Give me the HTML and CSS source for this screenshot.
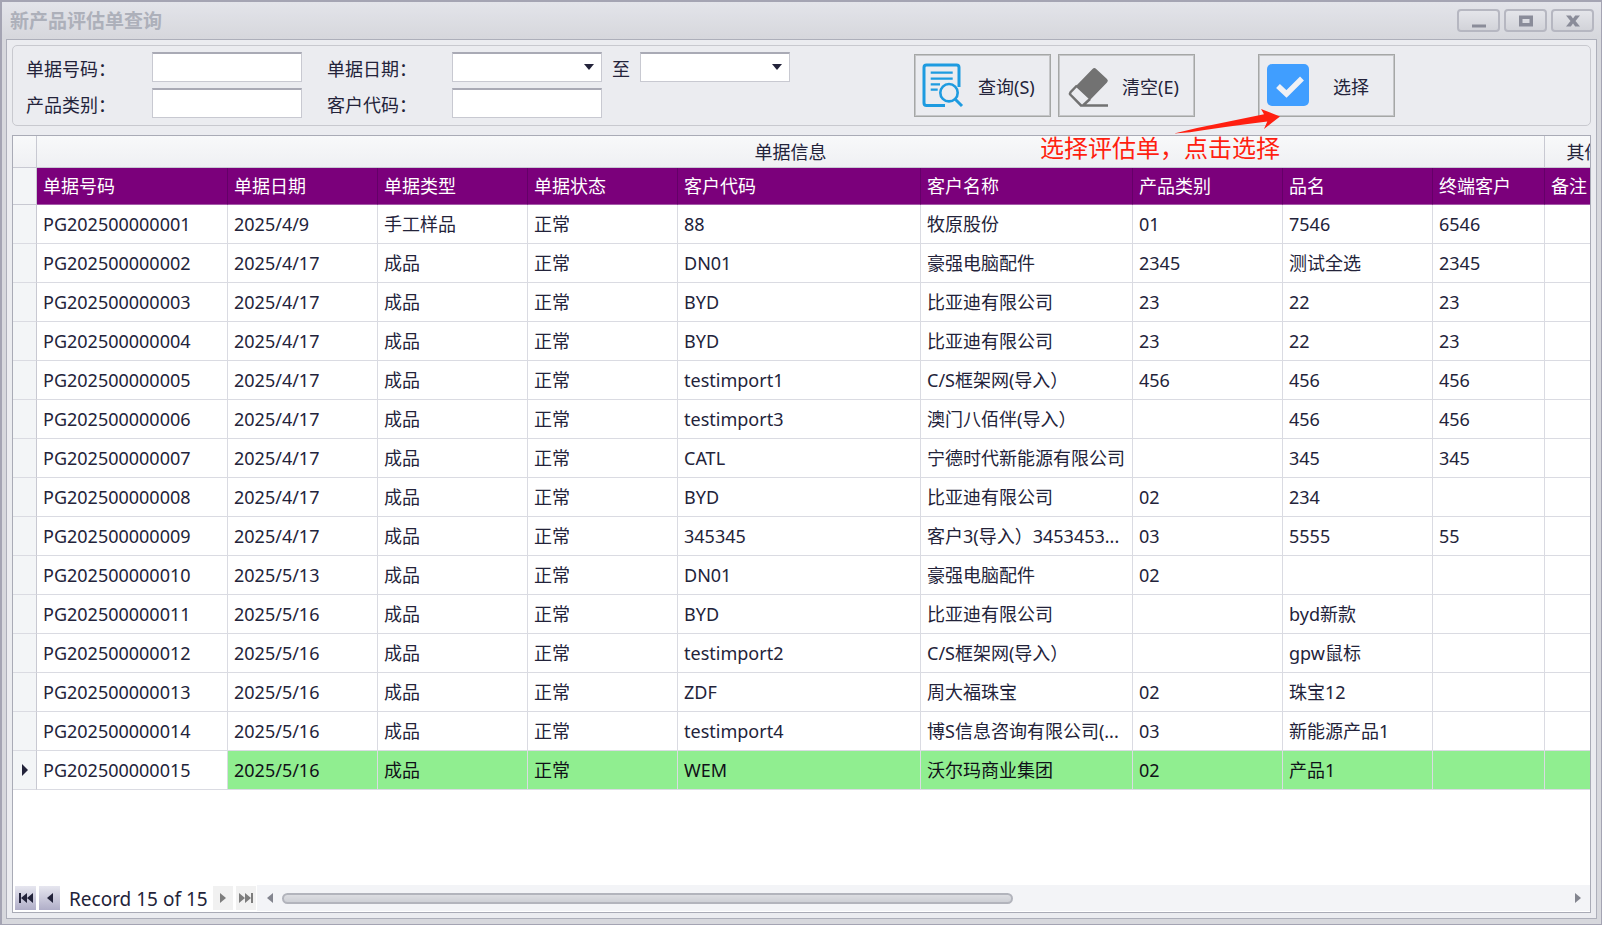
FILE: index.html
```html
<!DOCTYPE html>
<html lang="zh-CN">
<head>
<meta charset="utf-8">
<title>新产品评估单查询</title>
<link rel="stylesheet" href="styles.css">
</head>
<body>
<main class="window">
  <header class="titlebar">
    <h1 class="title">新产品评估单查询</h1>
    <div class="window-buttons">
      <button class="win-btn" type="button" aria-label="最小化"><svg width="16" height="14" viewBox="0 0 16 14"><path d="M1 10.500h14v3H1z"/></svg></button>
      <button class="win-btn" type="button" aria-label="最大化"><svg width="16" height="14" viewBox="0 0 16 14"><path fill-rule="evenodd" d="M1 1.500h14v11H1zM4.500 5v4h7V5z"/></svg></button>
      <button class="win-btn" type="button" aria-label="关闭"><svg width="16" height="14" viewBox="0 0 16 14"><path d="M1 1.500h4.800L8 4.500l2.200-3H15l-4.500 5.500 4.500 5.500h-4.800L8 9.500l-2.200 3H1l4.500-5.500z"/></svg></button>
    </div>
  </header>
  <div class="client">
    <form class="filters">
      <div class="fields">
        <label for="doc-no">单据号码：</label>
        <input class="box" id="doc-no" type="text">
        <label for="date-from">单据日期：</label>
        <span class="combo"><select class="box" id="date-from"></select><svg class="caret" width="10" height="6" viewBox="0 0 10 6"><path d="M0 0h10L5 6z"/></svg></span>
        <label class="to" for="date-to">至</label>
        <span class="combo"><select class="box" id="date-to"></select><svg class="caret" width="10" height="6" viewBox="0 0 10 6"><path d="M0 0h10L5 6z"/></svg></span>
        <label for="category">产品类别：</label>
        <input class="box" id="category" type="text">
        <label for="customer">客户代码：</label>
        <input class="box" id="customer" type="text">
      </div>
      <div class="actions">
        <button class="action" type="button">
          <svg width="46" height="48" viewBox="0 0 46 48" fill="none" stroke="#1e9be0" stroke-width="3">
            <path d="M39 25V5.500Q39 3 36.500 3H6.500Q4 3 4 5.500V41Q4 43.500 6.500 43.500H25"/>
            <path stroke-width="2.200" d="M10.700 10.700h22M10.700 16.700h22M10.700 22.300H20M10.700 27.700h7"/>
            <circle cx="29" cy="30.700" r="8.700" stroke-width="2.600"/>
            <path d="M35 37l7 7"/>
          </svg>
          <span class="caption">查询(S)</span>
        </button>
        <button class="action" type="button">
          <svg width="46" height="48" viewBox="0 0 46 48" fill="#727272">
            <path d="M28.500 7Q30.300 5.200 32.200 7L43 17Q44.800 18.800 43 20.500L26 38 11.500 24.500z"/>
            <path d="M13 23.500L6.500 30.200Q5.500 31.500 6.500 32.800L17 43.500H44M26 37l-6.500 6" fill="none" stroke="#727272" stroke-width="2.500"/>
          </svg>
          <span class="caption">清空(E)</span>
        </button>
        <button class="action choose" type="button">
          <svg width="46" height="48" viewBox="0 0 46 48">
            <rect x="3" y="2" width="42" height="42" rx="5" fill="#409eff"/>
            <path d="M14 24L22.500 32 38 16.500" fill="none" stroke="#f0f1f5" stroke-width="5.500"/>
          </svg>
          <span class="caption">选择</span>
        </button>
      </div>
    </form>

    <section class="grid">
      <div class="viewport">
        <table class="records">
          <colgroup><col class="w-mark"><col class="w-no"><col class="w-std"><col class="w-std"><col class="w-std"><col class="w-code"><col class="w-name"><col class="w-std"><col class="w-std"><col class="w-end"><col class="w-note"></colgroup>
          <thead>
            <tr class="bands"><th></th><th colspan="9">单据信息</th><th>其他信息</th></tr>
            <tr class="heads"><th></th><th>单据号码</th><th>单据日期</th><th>单据类型</th><th>单据状态</th><th>客户代码</th><th>客户名称</th><th>产品类别</th><th>品名</th><th>终端客户</th><th>备注</th></tr>
          </thead>
          <tbody>
            <tr><th></th><td>PG202500000001</td><td>2025/4/9</td><td>手工样品</td><td>正常</td><td>88</td><td>牧原股份</td><td>01</td><td>7546</td><td>6546</td><td></td></tr>
            <tr><th></th><td>PG202500000002</td><td>2025/4/17</td><td>成品</td><td>正常</td><td>DN01</td><td>豪强电脑配件</td><td>2345</td><td>测试全选</td><td>2345</td><td></td></tr>
            <tr><th></th><td>PG202500000003</td><td>2025/4/17</td><td>成品</td><td>正常</td><td>BYD</td><td>比亚迪有限公司</td><td>23</td><td>22</td><td>23</td><td></td></tr>
            <tr><th></th><td>PG202500000004</td><td>2025/4/17</td><td>成品</td><td>正常</td><td>BYD</td><td>比亚迪有限公司</td><td>23</td><td>22</td><td>23</td><td></td></tr>
            <tr><th></th><td>PG202500000005</td><td>2025/4/17</td><td>成品</td><td>正常</td><td>testimport1</td><td>C/S框架网(导入）</td><td>456</td><td>456</td><td>456</td><td></td></tr>
            <tr><th></th><td>PG202500000006</td><td>2025/4/17</td><td>成品</td><td>正常</td><td>testimport3</td><td>澳门八佰伴(导入）</td><td></td><td>456</td><td>456</td><td></td></tr>
            <tr><th></th><td>PG202500000007</td><td>2025/4/17</td><td>成品</td><td>正常</td><td>CATL</td><td>宁德时代新能源有限公司</td><td></td><td>345</td><td>345</td><td></td></tr>
            <tr><th></th><td>PG202500000008</td><td>2025/4/17</td><td>成品</td><td>正常</td><td>BYD</td><td>比亚迪有限公司</td><td>02</td><td>234</td><td></td><td></td></tr>
            <tr><th></th><td>PG202500000009</td><td>2025/4/17</td><td>成品</td><td>正常</td><td>345345</td><td>客户3(导入）3453453...</td><td>03</td><td>5555</td><td>55</td><td></td></tr>
            <tr><th></th><td>PG202500000010</td><td>2025/5/13</td><td>成品</td><td>正常</td><td>DN01</td><td>豪强电脑配件</td><td>02</td><td></td><td></td><td></td></tr>
            <tr><th></th><td>PG202500000011</td><td>2025/5/16</td><td>成品</td><td>正常</td><td>BYD</td><td>比亚迪有限公司</td><td></td><td>byd新款</td><td></td><td></td></tr>
            <tr><th></th><td>PG202500000012</td><td>2025/5/16</td><td>成品</td><td>正常</td><td>testimport2</td><td>C/S框架网(导入）</td><td></td><td>gpw鼠标</td><td></td><td></td></tr>
            <tr><th></th><td>PG202500000013</td><td>2025/5/16</td><td>成品</td><td>正常</td><td>ZDF</td><td>周大福珠宝</td><td>02</td><td>珠宝12</td><td></td><td></td></tr>
            <tr><th></th><td>PG202500000014</td><td>2025/5/16</td><td>成品</td><td>正常</td><td>testimport4</td><td>博S信息咨询有限公司(...</td><td>03</td><td>新能源产品1</td><td></td><td></td></tr>
            <tr class="current"><th><svg width="6" height="12" viewBox="0 0 6 12"><path d="M0 0l6 6-6 6z"/></svg></th><td>PG202500000015</td><td>2025/5/16</td><td>成品</td><td>正常</td><td>WEM</td><td>沃尔玛商业集团</td><td>02</td><td>产品1</td><td></td><td></td></tr>
          </tbody>
        </table>
      </div>
      <footer class="navigator">
        <button class="nav" type="button" aria-label="第一条"><svg width="16" height="12" viewBox="0 0 16 12"><path d="M1 1h2v10H1zM9 1v10L3 6zM15 1v10L9 6z"/></svg></button>
        <button class="nav" type="button" aria-label="上一条"><svg width="8" height="12" viewBox="0 0 8 12"><path d="M7 1v10L1 6z"/></svg></button>
        <span class="position">Record 15 of 15</span>
        <button class="nav off" type="button" aria-label="下一条" disabled><svg width="8" height="12" viewBox="0 0 8 12"><path d="M1 1v10l6-5z"/></svg></button>
        <button class="nav off" type="button" aria-label="最后一条" disabled><svg width="16" height="12" viewBox="0 0 16 12"><path d="M13 1h2v10h-2zM7 1v10l6-5zM1 1v10l6-5z"/></svg></button>
        <div class="scrollbar">
          <button class="scroll-arrow" type="button" aria-label="向左滚动"><svg width="6" height="10" viewBox="0 0 6 10"><path d="M6 0v10L0 5z"/></svg></button>
          <div class="track"><div class="thumb"></div></div>
          <button class="scroll-arrow" type="button" aria-label="向右滚动"><svg width="6" height="10" viewBox="0 0 6 10"><path d="M0 0v10l6-5z"/></svg></button>
        </div>
      </footer>
    </section>
  </div>
  <svg class="arrow" width="108" height="28" viewBox="0 0 108 28"><path fill="#ff1f10" d="M1 25.500L24 20 91 6.300 88 1l19 7.500L91 21l3.300-7.500Q50 19 17 24.300z"/></svg>
  <p class="note">选择评估单，点击选择</p>
</main>
</body>
</html>
```
FILE: styles.css
```css
* { box-sizing: border-box; }

body {
  margin: 0;
  font-family: "Noto Sans", "Noto Sans CJK SC", sans-serif;
  font-size: 18px;
  line-height: 24px;
  color: #23233a;
}

button, input, select { font: inherit; color: inherit; margin: 0; }
svg { display: block; flex: none; }

.window {
  position: relative;
  display: flex;
  flex-direction: column;
  min-height: 100vh;
  padding: 0 4px 5px 4px;
  border: 2px solid #a4a4b3;
  border-bottom-width: 1px;
  border-right-width: 1px;
  background: #d7d8dd;
}

.titlebar {
  display: flex;
  justify-content: space-between;
  align-items: center;
  height: 37px;
  margin: 0 -4px;
  padding: 0 7px 0 8px;
  background: linear-gradient(#e3e4ea, #d6d7dc);
}

.title { margin: 0; font-size: 19px; font-weight: bold; color: #adb0ba; }

.window-buttons { display: flex; gap: 4px; }

.win-btn {
  display: grid;
  place-items: center;
  width: 43px;
  height: 23px;
  padding: 0;
  border: 2px solid #b6b7c1;
  border-radius: 4px;
  background: linear-gradient(#e4e5ea, #d2d3d9);
  fill: #8a8c99;
}

.client {
  display: flex;
  flex-direction: column;
  flex: 1;
  gap: 9px;
  padding: 5px;
  border: 1px solid #adafba;
  background: #ebecf0;
}

.filters {
  display: flex;
  height: 81px;
  border: 1px solid #c8c9cf;
  border-radius: 5px;
}

.fields {
  display: grid;
  grid-template-columns: 126px 150px 150px 150px 38px 150px;
  grid-template-rows: 30px 30px;
  row-gap: 6px;
  align-items: center;
  padding: 6px 0 0 13px;
}

.fields label { padding-top: 4px; }
.fields label[for="date-from"], .fields label[for="customer"] { padding-left: 25px; }
.fields .to { padding-left: 10px; }

.box {
  width: 100%;
  height: 30px;
  padding: 0 6px;
  border: 1px solid #c8c9d1;
  border-top: 2px solid #a9aab5;
  border-radius: 0;
  background: #fff;
  appearance: none;
}

.combo { display: grid; grid-template-columns: 1fr 18px; align-items: center; }
.combo .box { grid-area: 1 / 1 / 2 / 3; }
.combo .caret { grid-area: 1 / 2; fill: #23233a; pointer-events: none; }

.actions { display: flex; gap: 7px; padding: 8px 0 0 124px; }

.action {
  display: flex;
  align-items: center;
  width: 137px;
  height: 63px;
  padding: 0 5px;
  border: 1px solid #a5a7a6;
  outline: 1px solid #c5c6c8;
  outline-offset: -2px;
  background: #ebecf0;
}

.caption { flex: 1; padding: 2px 0 0 12px; text-align: left; white-space: nowrap; }
.choose { margin-left: 56px; }
.choose .caption { padding-left: 23px; }

.grid {
  display: flex;
  flex-direction: column;
  flex: 1;
  border: 1px solid #a9abb6;
  background: #fff;
}

.viewport { flex: 1; width: 100%; overflow: hidden; contain: inline-size; }

.records {
  width: 1648px;
  table-layout: fixed;
  border-collapse: separate;
  border-spacing: 0;
}

.w-mark { width: 24px; }
.w-no { width: 191px; }
.w-std { width: 150px; }
.w-code { width: 243px; }
.w-name { width: 212px; }
.w-end { width: 112px; }
.w-note { width: 116px; }

.records th, .records td {
  height: 39px;
  padding: 0 0 0 6px;
  border-right: 1px solid #dadbe2;
  border-bottom: 1px solid #dadbe2;
  font-weight: normal;
  text-align: left;
  white-space: nowrap;
  overflow: hidden;
}

.records tbody th { padding: 0 0 0 9px; background: #f3f5f7; border-right-color: #c8c9d2; }

.records .bands th {
  height: 32px;
  padding: 0;
  border-color: #c8c9d2;
  background: linear-gradient(#f8f9fa, #eff0f3);
  text-align: center;
}

.records .heads th {
  height: 37px;
  border-right-color: #640068;
  border-bottom-color: #a45aa8;
  background: #7b007b;
  color: #fff;
}

.records .heads th:first-child { background: #f3f5f7; border-color: #c8c9d2; }

.records .current td { background: #90ee90; color: #101018; }
.records .current td:nth-child(2) { background: #fff; color: #23233a; }
.current svg { fill: #23233a; }

.navigator { display: flex; height: 27px; padding-left: 2px; }

.nav {
  display: grid;
  place-items: center;
  width: 21px;
  height: 24px;
  margin: 1px 3px 0 0;
  padding: 0;
  border: 0;
  background: linear-gradient(#e6e6ef, #b0aec8);
  fill: #23233a;
}

.nav.off { width: 20px; background: #f1f1f1; fill: #7d7d7d; }
.position { width: 150px; padding: 2px 0 0 6px; white-space: nowrap; font-size: 19px; }

.scrollbar {
  display: flex;
  flex: 1;
  align-items: center;
  height: 26px;
  margin-left: -2px;
  background: #f3f4f7;
}

.scroll-arrow {
  display: grid;
  place-items: center;
  width: 25px;
  height: 24px;
  padding: 0;
  border: 0;
  background: none;
  fill: #83858f;
}

.track { flex: 1; }

.thumb {
  width: 57%;
  height: 11px;
  border: 2px solid #b2b4bc;
  border-radius: 6px;
  background: linear-gradient(#dcdde1, #ced0d6);
}

.arrow { position: absolute; left: 1171px; top: 106px; pointer-events: none; }

.note {
  position: absolute;
  left: 1038px;
  top: 130px;
  margin: 0;
  font-family: "Noto Sans CJK SC", sans-serif;
  font-size: 24px;
  line-height: 30px;
  color: #ff1f10;
  white-space: nowrap;
}
```
